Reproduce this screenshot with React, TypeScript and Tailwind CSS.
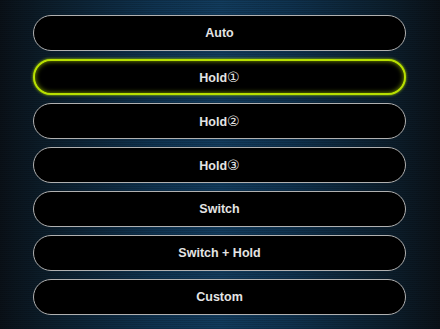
import React from "react";

const items: [string, string][] = [
  ["Auto", ""],
  ["Hold", "①"],
  ["Hold", "②"],
  ["Hold", "③"],
  ["Switch", ""],
  ["Switch + Hold", ""],
  ["Custom", ""],
];

function Label({ t, c }: { t: string; c: string }) {
  return (
    <span className="text-[12.5px] font-bold text-[#e4e4e4] font-['Liberation_Sans',Arial,sans-serif] leading-none">
      {t}
      {c && <span className="font-normal text-[14px] font-['DejaVu_Sans',sans-serif] leading-none">{c}</span>}
    </span>
  );
}

export default function App() {
  return (
    <div className="relative w-[440px] h-[329px] overflow-hidden bg-[linear-gradient(90deg,#0a1118_0%,#0c1d2a_10%,#0f3350_35%,#123c5e_50%,#0f3350_65%,#0c1d2a_90%,#0a1118_100%)]">
      <div className="absolute inset-0 bg-[repeating-linear-gradient(0deg,rgba(0,0,0,0.16)_0px,rgba(0,0,0,0.16)_1px,transparent_1px,transparent_2px)]" />
      <div className="relative flex flex-col gap-2 pt-[15px] pl-[33px] w-[406px]">
        {items.map(([t, c], i) =>
          i === 1 ? (
            <div
              key={i}
              className="h-9 rounded-full border-[2.5px] border-[#b8e000] bg-black shadow-[0_0_3px_#a8d000,inset_0_0_5px_#7f9c00] flex items-center justify-center"
            >
              <Label t={t} c={c} />
            </div>
          ) : (
            <div
              key={i}
              className="h-9 rounded-full border-[1.5px] border-[#b0b0b0] bg-black flex items-center justify-center"
            >
              <Label t={t} c={c} />
            </div>
          )
        )}
      </div>
    </div>
  );
}
